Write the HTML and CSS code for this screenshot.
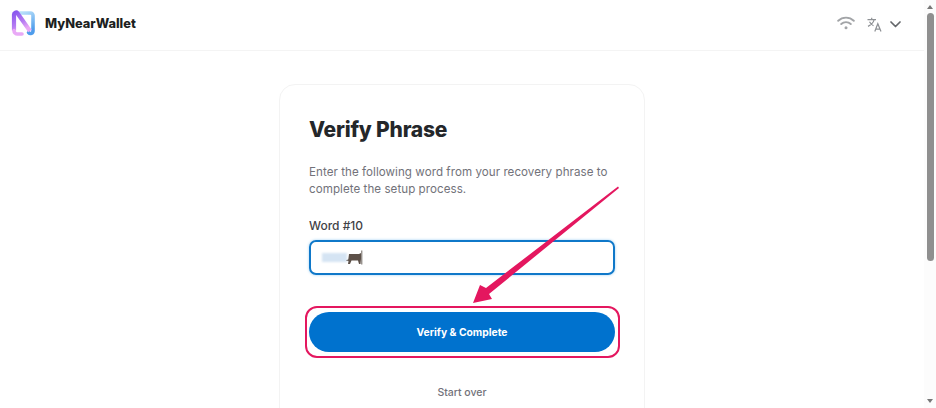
FILE: index.html
```html
<!DOCTYPE html>
<html lang="en">
<head>
  <meta charset="UTF-8" />
  <title>MyNearWallet - Verify Phrase</title>
  <link rel="stylesheet" href="styles.css">
</head>
<body>

  <div class="page">
    <header class="topbar">
      <div class="brand">
        <svg class="logo" width="24" height="26" viewBox="0 0 24 26" fill="none">
          <defs>
            <linearGradient id="logoLeft" x1="0" y1="0" x2="0.5" y2="1">
              <stop offset="0" stop-color="#8a58ee"/>
              <stop offset="0.6" stop-color="#b57cf2"/>
              <stop offset="1" stop-color="#eaa8f5"/>
            </linearGradient>
            <linearGradient id="logoRight" x1="0" y1="0" x2="0.3" y2="1">
              <stop offset="0" stop-color="#b9e0fa"/>
              <stop offset="1" stop-color="#4f9dec"/>
            </linearGradient>
          </defs>
          <path d="M9 3h10.500a2.500 2.500 0 0 1 2.500 2.500V21a2.500 2.500 0 0 1-4.400 1.600" stroke="url(#logoRight)" stroke-width="3.600" stroke-linecap="round"/>
          <path d="M3 20.500V4.500a2 2 0 0 1 3.500-1.300L19 21" stroke="url(#logoLeft)" stroke-width="4.200" stroke-linejoin="round"/>
          <path d="M3 20.500a3.500 3.500 0 0 0 3.500 3.500H11" stroke="#e9a9f6" stroke-width="3.600" stroke-linecap="round"/>
        </svg>
        <span class="brand-name">MyNearWallet</span>
      </div>
      <div class="topbar-icons">
        <svg width="18" height="14" viewBox="0 0 18 14" fill="none" stroke="#a2a4a7" stroke-width="1.900" stroke-linecap="round">
          <path d="M1.200 4.800a11.200 11.200 0 0 1 15.600 0"/>
          <path d="M4.200 8a7 7 0 0 1 9.600 0"/>
          <circle cx="9" cy="11.800" r="1.500" fill="#a2a4a7" stroke="none"/>
        </svg>
        <svg class="icon-lang" width="15" height="15" viewBox="0 0 15 15" fill="none" stroke="#8e9195" stroke-width="1.200">
          <path d="M.5 2.700h8.500M4.700 .8v1.900M7.200 2.700C6.400 5.600 4 8 1 9.400M2.500 4.800c1 1.800 2.300 3 4 3.900"/>
          <path d="M7.800 14.500l3-7.800 3.200 7.800M8.800 12.200h4"/>
        </svg>
        <svg class="icon-chevron" width="11" height="7" viewBox="0 0 11 7" fill="none" stroke="#64676b" stroke-width="1.700" stroke-linecap="round" stroke-linejoin="round">
          <path d="M1 1l4.500 4.500L10 1"/>
        </svg>
      </div>
    </header>

    <main class="card">
      <h1>Verify Phrase</h1>
      <p class="intro">Enter the following word from your recovery phrase to complete the setup process.</p>
      <label>Word #10</label>
      <div class="word-field">
        <span class="word-blur"></span>
        <svg class="word-mark" width="17" height="15" viewBox="0 0 17 15">
          <path d="M0 10c2 0 2.500-.8 2.500-2.500L3 4h10l2-1v6l-.5 5H13l-1-3.500H5.500L4 14H2l.5-3H0z" fill="#5d5149"/>
          <path d="M15.800 .5v14" stroke="#6d6660" stroke-width="1"/>
        </svg>
      </div>
      <div class="verify-wrap">
        <button type="button">Verify &amp; Complete</button>
      </div>
      <div class="start-over">Start over</div>
    </main>

    <!-- Pfeil liegt ueber der Karte -->
    <svg class="arrow" width="160" height="130" viewBox="0 0 160 130">
      <path d="M153 6.500L21 108l-6-3-7 18 19-4-3-5L154 8z" fill="#e4175f"/>
    </svg>
  </div>

  <div class="scrollbar">
    <span class="scroll-up"></span>
    <span class="scroll-thumb"></span>
    <span class="scroll-down"></span>
  </div>

</body>
</html>
```

FILE: styles.css
```css
html, body {
  margin: 0;
  height: 408px;
  overflow: hidden;
}
body {
  display: flex;
  font-family: Inter, Arial, sans-serif;
  background-color: #fff;
  color: #24272a;
}
.page {
  position: relative;
  flex: 1;
  min-width: 0;
  height: 408px;
  overflow: hidden;
}
.topbar {
  display: flex;
  align-items: center;
  justify-content: space-between;
  box-sizing: border-box;
  height: 51px;
  padding: 0 23px 4px 11px;
  border-bottom: 1px solid #f4f4f4;
}
.brand {
  display: flex;
  align-items: center;
  gap: 10px;
}
.brand-name {
  font-size: 12.800px;
  font-weight: 800;
  color: #1d1f21;
}
.topbar-icons {
  display: flex;
  align-items: center;
}
.icon-lang {
  margin-left: 12px;
  margin-top: 3px;
}
.icon-chevron {
  margin-left: 8px;
  margin-top: 2px;
}
.card {
  box-sizing: border-box;
  width: 366px;
  height: 400px;
  margin: 33px auto 0;
  padding: 31px 29px;
  border: 1px solid #f3f3f3;
  border-radius: 16px;
}
h1 {
  margin: 0;
  font-size: 21px;
  line-height: 28px;
  font-weight: 800;
  letter-spacing: -0.2px;
  color: #24272a;
}
.intro {
  margin: 20px 0 0;
  font-size: 11.600px;
  line-height: 17px;
  letter-spacing: 0.05px;
  color: #72727a;
}
label {
  display: block;
  margin-top: 20px;
  font-size: 12px;
  line-height: 16px;
  font-weight: 500;
  color: #3f4246;
}
.word-field {
  display: flex;
  align-items: center;
  box-sizing: border-box;
  height: 35px;
  margin-top: 6px;
  padding-left: 11px;
  border: 2px solid #0f78c9;
  border-radius: 7px;
  box-shadow: 0 0 3px #9fd0f2;
}
.word-blur {
  width: 25px;
  height: 9px;
  background-color: #d5e4f3;
  filter: blur(1px);
}
.word-mark {
  margin-left: -1px;
}
.verify-wrap {
  margin: 31px -5px 0 -4px;
  padding: 4px 3px 4px 2px;
  border: 2px solid #e4175f;
  border-radius: 12px;
}
button {
  display: block;
  width: 100%;
  height: 40px;
  border: none;
  border-radius: 20px;
  background-color: #0072ce;
  color: #fff;
  font-family: inherit;
  font-size: 10.300px;
  font-weight: 700;
}
.start-over {
  margin-top: 28px;
  text-align: center;
  font-size: 10.500px;
  font-weight: 500;
  color: #72727a;
}
.arrow {
  position: absolute;
  left: 465px;
  top: 180px;
}
.scrollbar {
  display: flex;
  flex-direction: column;
  align-items: center;
  flex: none;
  width: 12px;
  height: 408px;
  background-color: #fcfcfc;
}
.scroll-up, .scroll-down {
  width: 0;
  height: 0;
  border-left: 3.500px solid transparent;
  border-right: 3.500px solid transparent;
}
.scroll-up {
  margin: 5px 0 4px;
  border-bottom: 4px solid #777;
}
.scroll-down {
  margin: auto 0 5px;
  border-top: 4px solid #777;
}
.scroll-thumb {
  width: 7px;
  height: 248px;
  border-radius: 4px;
  background-color: #8f8f8f;
}
```
